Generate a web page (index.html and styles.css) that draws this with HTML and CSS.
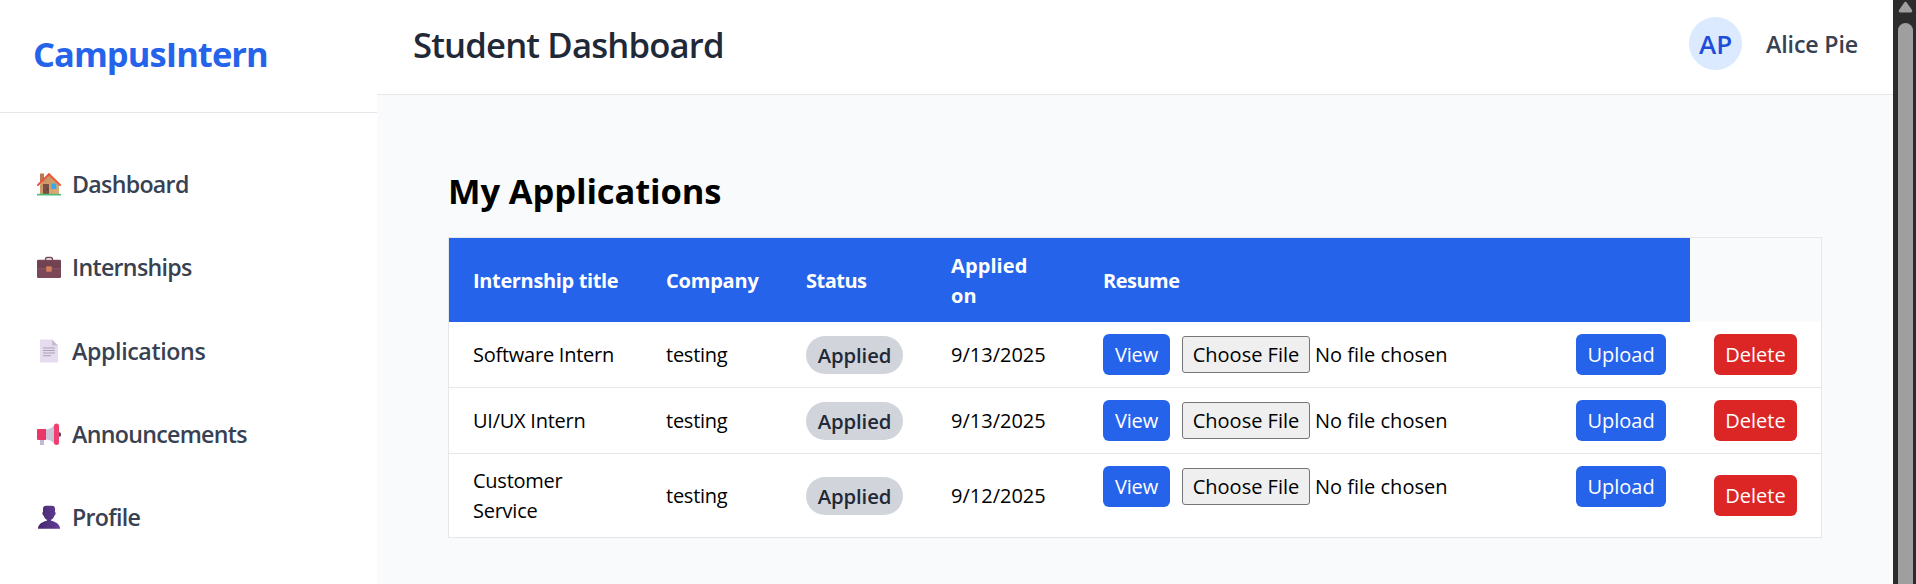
FILE: index.html
```html
<!DOCTYPE html>
<html lang="en">
<head>
<meta charset="utf-8">
<title>CampusIntern</title>
<link rel="stylesheet" href="styles.css">
</head>
<body>
<div class="app">
  <aside class="sidebar">
    <div class="brand">CampusIntern</div>
    <nav class="nav">
      <a class="nav-item">
        <svg class="icon" viewBox="0 0 24 24">
          <defs><linearGradient id="wall" x1="0" x2="1" y1="0" y2="1"><stop offset="0" stop-color="#c58c5c"/><stop offset="1" stop-color="#dcae7b"/></linearGradient></defs>
          <path d="M3 1.500h4V10H3z" fill="#b67a50"/>
          <path d="M12 2.500 22 13v9.500H3V13z" fill="url(#wall)"/>
          <path d="M12 2.200 23 13" stroke="#ec5a35" stroke-width="2" stroke-linecap="round"/>
          <path d="M12 2.200 1 13" stroke="#e8533f" stroke-width="2" stroke-linecap="round"/>
          <path d="M6 12h6v10H6z" fill="#765044"/><circle cx="10.700" cy="17.200" r=".8" fill="#46332e"/>
          <path d="M14.300 11.500h5v5.500h-5z" fill="#32aaf0"/>
          <path d="M0 21.800h24v1.700H0z" fill="#50bd74"/>
        </svg>Dashboard</a>
      <a class="nav-item">
        <svg class="icon" viewBox="0 0 24 24">
          <path d="M8.500 6V4.500a2 2 0 0 1 2-2h3a2 2 0 0 1 2 2V6" fill="none" stroke="#714953" stroke-width="1.400"/>
          <rect y="4.800" width="24" height="18.200" rx="1.200" fill="#7a4857"/>
          <path d="M0 6h24v7.500H0z" fill="#714251"/>
          <path d="M0 13.300h24v.9H0z" fill="#8b5965"/>
          <rect x="9.200" y="11.300" width="5.600" height="5.500" rx=".8" fill="#d27d5b"/>
        </svg>Internships</a>
      <a class="nav-item nav-item-wide">
        <svg class="icon" viewBox="0 0 24 24">
          <path d="M3 .5h12l6 6v17H3z" fill="#e6dcf0"/>
          <path d="M15 .5l6 6h-6z" fill="#c5bdcc"/>
          <path d="M6 9h12M6 11.500h12M6 14h12M6 16.800h8" stroke="#aaa0b0" stroke-width="1.100"/>
        </svg>Applications</a>
      <a class="nav-item">
        <svg class="icon" viewBox="0 0 24 24">
          <path d="M3 15h4v8H3z" fill="#c5b5d8"/>
          <circle cx="22" cy="12.500" r="2.200" fill="#554b5b"/>
          <path d="M8.500 7.500C13 7.500 16 5 17.500 2.500v20C16 19.500 13 17.500 8.500 17.500z" fill="#cbc4d8"/>
          <path d="M0 8a1 1 0 0 1 1-1h8v11H1a1 1 0 0 1-1-1z" fill="#e83768"/>
          <rect x="17" y="1.500" width="5" height="21.500" rx="2.500" fill="#ee3f70"/>
        </svg>Announcements</a>
      <a class="nav-item">
        <svg class="icon" viewBox="0 0 24 24">
          <defs><linearGradient id="person"><stop offset="0" stop-color="#45276c"/><stop offset="1" stop-color="#653e9b"/></linearGradient></defs>
          <path d="M9 .7h6Q18 .7 18 4v3q1 .5.5 2t-1.300 2c-.6 2-1.700 3.200-3.200 3.800v1c4.500.7 9 3.500 9 7.900H1c0-4.400 4.500-7.200 9-7.900v-1c-1.500-.6-2.600-1.800-3.200-3.800Q6 10.500 5.500 9T6 7V4Q6 .7 9 .7z" fill="url(#person)"/>
        </svg>Profile</a>
    </nav>
  </aside>
  <main class="main">
    <header class="topbar">
      <h1 class="page-title">Student Dashboard</h1>
      <div class="user"><span class="avatar">AP</span><span class="user-name">Alice Pie</span></div>
    </header>
    <section class="content">
      <h2 class="section-title">My Applications</h2>
      <table class="table">
        <colgroup><col class="c-title"><col class="c-company"><col class="c-status"><col class="c-date"><col class="c-resume"><col class="c-action"></colgroup>
        <thead>
          <tr><th class="th-title">Internship title</th><th>Company</th><th class="th-status">Status</th><th class="th-date">Applied on</th><th class="th-resume">Resume</th><td></td></tr>
        </thead>
        <tbody>
          <tr><td>Software Intern</td><td>testing</td><td><span class="badge">Applied</span></td><td class="date">9/13/2025</td>
            <td class="resume"><div class="resume-row"><button class="btn view">View</button><span class="choose">Choose File</span><span class="file-name">No file chosen</span><button class="btn upload">Upload</button></div></td>
            <td><button class="btn delete">Delete</button></td></tr>
          <tr><td>UI/UX Intern</td><td>testing</td><td><span class="badge">Applied</span></td><td class="date">9/13/2025</td>
            <td class="resume"><div class="resume-row"><button class="btn view">View</button><span class="choose">Choose File</span><span class="file-name">No file chosen</span><button class="btn upload">Upload</button></div></td>
            <td><button class="btn delete">Delete</button></td></tr>
          <tr class="tall"><td>Customer Service</td><td>testing</td><td><span class="badge">Applied</span></td><td class="date">9/12/2025</td>
            <td class="resume"><div class="resume-row"><button class="btn view">View</button><span class="choose">Choose File</span><span class="file-name">No file chosen</span><button class="btn upload">Upload</button></div></td>
            <td><button class="btn delete">Delete</button></td></tr>
        </tbody>
      </table>
    </section>
  </main>
  <div class="scrollbar">
    <svg class="scroll-up" viewBox="0 0 15 13"><path d="M6.200 1.600Q7.500 0 8.800 1.600L14.500 9.800Q15.600 12.500 13 12.500H2Q-.6 12.500.5 9.800z" fill="#9f9f9f"/></svg>
    <div class="scroll-thumb"></div>
  </div>
</div>
</body>
</html>
```

FILE: styles.css
```css
* { box-sizing: border-box; }
body { margin: 0; overflow: hidden; font-family: "Open Sans", "Noto Sans", sans-serif; }
.app { display: flex; height: 584px; background: #f9fafb; }

.sidebar { width: 377px; flex: none; background: #fff; }
.brand {
  height: 113px; padding: 0 0 5px 33px; display: flex; align-items: center;
  border-bottom: 1px solid #e5e7eb; color: #2563eb;
  font-size: 34.5px; font-weight: 700; letter-spacing: -0.95px;
}
.nav { padding: 29.5px 0 0 37px; }
.nav-item {
  height: 83.25px; display: flex; align-items: center; gap: 11px;
  color: #374151; font-size: 23.2px; font-weight: 600; letter-spacing: -0.7px;
}
.nav-item-wide { letter-spacing: -0.38px; }
.icon { width: 24px; height: 24px; flex: none; }

.main { flex: 1; min-width: 0; }
.topbar {
  height: 95px; padding: 0 35px 7px 36px; display: flex; align-items: center;
  justify-content: space-between; background: #fff; border-bottom: 1px solid #e5e7eb;
}
.page-title {
  margin: 0; padding-top: 2px; color: #1f2937;
  font-size: 34.7px; font-weight: 600; letter-spacing: -0.85px; line-height: 48px;
}
.user { display: flex; align-items: center; gap: 24px; }
.avatar {
  width: 53px; height: 53px; border-radius: 50%; background: #dbeafe; color: #1d4ed8;
  display: flex; align-items: center; justify-content: center;
  font-size: 26px; font-weight: 600;
}
.user-name { color: #374151; font-size: 23.2px; font-weight: 600; letter-spacing: -0.15px; }

.content { padding: 72px 71px 0; }
.section-title {
  margin: 0 0 22px; color: #000;
  font-size: 34.5px; font-weight: 700; letter-spacing: -0.1px; line-height: 48px;
}
.table {
  width: 1374px; table-layout: fixed; border-collapse: separate; border-spacing: 0;
  border: 1px solid #e5e7eb; color: #000;
  font-size: 20px; line-height: 30px; letter-spacing: -0.25px;
}
.c-title { width: 193px; }
.c-company { width: 140px; }
.c-status { width: 145px; }
.c-date { width: 152px; }
.c-resume { width: 611px; }
.c-action { width: 131px; }
.table th, .table td { padding: 0 24px; text-align: left; vertical-align: middle; }
.table thead tr { height: 84px; }
.table th { padding-top: 1px; background: #2563eb; color: #fff; font-weight: 700; letter-spacing: -0.2px; }
.table .th-title { white-space: nowrap; letter-spacing: -0.35px; }
.table .th-status { letter-spacing: -0.5px; }
.table .th-date { padding-right: 45px; letter-spacing: 0.1px; }
.table .th-resume { letter-spacing: -0.5px; }
.table tbody tr { height: 66px; background: #fff; }
.table tbody td { border-bottom: 1px solid #e5e7eb; }
.table tbody .tall { height: 83px; }
.table tbody .tall td { border-bottom: 0; }
.table .date { letter-spacing: 0; }
.table .resume { padding-top: 12px; vertical-align: top; }

.badge {
  width: 97px; height: 38px; border-radius: 19px; background: #d1d5db; color: #1f2937;
  display: flex; align-items: center; justify-content: center;
  font-size: 20.3px; font-weight: 600; letter-spacing: -0.1px;
}
.resume-row { display: flex; align-items: center; }
.btn {
  height: 41px; padding: 0; border: 0; border-radius: 6px; color: #fff;
  font: 400 20px/30px "Open Sans", "Noto Sans", sans-serif;
}
.view { width: 67px; margin-right: 12px; background: #2563eb; letter-spacing: -0.2px; }
.choose {
  width: 128px; height: 37px; border: 1px solid #767676; border-radius: 3px;
  background: #efefef; text-align: center; line-height: 35px; letter-spacing: 0;
}
.file-name { flex: 1; padding-left: 5px; letter-spacing: 0; }
.upload { width: 90px; background: #2563eb; }
.delete { display: block; width: 83px; background: #dc2626; }

.scrollbar {
  width: 23px; flex: none; padding: 1px 0 0 5px; background: #2c2c2c;
  display: flex; flex-direction: column; align-items: flex-start; gap: 10px;
}
.scroll-up { width: 15px; height: 12px; flex: none; }
.scroll-thumb { width: 15px; flex: 1; border-radius: 7.5px 7.5px 0 0; background: #9f9f9f; }
```
